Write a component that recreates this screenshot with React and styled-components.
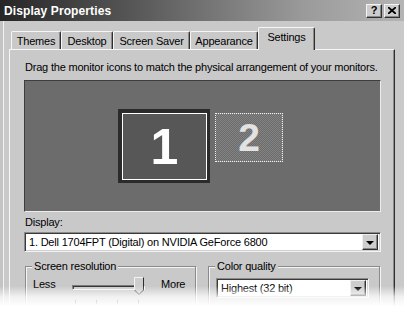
import styled, { createGlobalStyle } from "styled-components";

const Global = createGlobalStyle`
  html, body {
    margin: 0;
    padding: 0;
    background: #ffffff;
  }
  body {
    font-family: "Liberation Sans", Arial, sans-serif;
    font-size: 11px;
    color: #000;
  }
`;

const Window = styled.div`
  position: relative;
  width: 404px;
  height: 310px;
  overflow: hidden;
  background: #c9c9c9;
  box-shadow: inset 3px 0 0 #c4c4c4, inset 4px 0 0 #f2f2f2;
`;

const TitleBar = styled.div`
  height: 21px;
  display: flex;
  align-items: center;
  padding: 0 4px 0 4px;
  background: linear-gradient(to right, #262626 0%, #5a5a5a 35%, #9a9a9a 75%, #b4b4b4 100%);
  box-sizing: border-box;
`;

const Title = styled.span`
  flex: 1;
  color: #ffffff;
  font-weight: bold;
  font-size: 12px;
  letter-spacing: 0.1px;
`;

const CaptionButton = styled.div`
  width: 16px;
  height: 14px;
  box-sizing: border-box;
  margin-left: ${(p) => (p.$gap ? "2px" : "0")};
  background: #cdcdcd;
  border-top: 1px solid #f4f4f4;
  border-left: 1px solid #f4f4f4;
  border-right: 1px solid #303030;
  border-bottom: 1px solid #303030;
  box-shadow: inset -1px -1px 0 #888;
  display: flex;
  align-items: center;
  justify-content: center;
  font-weight: bold;
  font-size: 11px;
  line-height: 1;
  color: #000;
`;

const Body = styled.div`
  padding: 6px 9px 0 9px;
`;

const TabRow = styled.div`
  display: flex;
  align-items: flex-end;
  height: 22px;
  padding-left: 2px;
  position: relative;
  z-index: 1;
`;

const Tab = styled.div`
  box-sizing: border-box;
  width: ${(p) => p.$w}px;
  height: ${(p) => (p.$active ? 23 : 18)}px;
  margin-bottom: ${(p) => (p.$active ? -1 : 0)}px;
  padding-top: 3px;
  text-align: center;
  background: #c9c9c9;
  border-top: 1px solid #f6f6f6;
  border-left: 1px solid #f6f6f6;
  border-right: 1px solid #2e2e2e;
  border-top-left-radius: 2px;
  border-top-right-radius: 2px;
  box-shadow: inset -1px 0 0 #8a8a8a;
  letter-spacing: -0.2px;
  font-size: 11px;
`;

const Panel = styled.div`
  box-sizing: border-box;
  width: 386px;
  height: 280px;
  border-top: 1px solid #f6f6f6;
  border-left: 1px solid #f6f6f6;
  border-right: 1px solid #2e2e2e;
  box-shadow: inset -1px 0 0 #8a8a8a;
  padding: 11px 14px 0 14px;
`;

const Hint = styled.div`
  line-height: 13px;
  letter-spacing: -0.2px;
  padding-left: 1px;
`;

const MonitorArea = styled.div`
  box-sizing: border-box;
  margin-top: 6px;
  width: 357px;
  height: 132px;
  background: #6c6c6c;
  border-top: 1px solid #3e3e3e;
  border-left: 1px solid #3e3e3e;
  border-right: 1px solid #ececec;
  border-bottom: 1px solid #ececec;
  display: flex;
  align-items: flex-start;
  padding: 28px 0 0 93px;
  gap: 5px;
`;

const PrimaryMonitor = styled.div`
  box-sizing: border-box;
  width: 92px;
  height: 74px;
  background: #2b2b2b;
  padding: 4px 3px 3px 4px;
`;

const MonitorFace = styled.div`
  box-sizing: border-box;
  height: 100%;
  border: 1px solid #ffffff;
  background: #575757;
  display: flex;
  align-items: center;
  justify-content: center;
  color: #ffffff;
  font-weight: bold;
  font-size: ${(p) => p.$size}px;
  line-height: 1;
`;

const SecondaryMonitor = styled.div`
  box-sizing: border-box;
  margin-top: 4px;
  width: 68px;
  height: 49px;
  border: 1px dotted #f0f0f0;
  background-color: #767676;
  background-image: repeating-conic-gradient(#6a6a6a 0 25%, #858585 0 50%);
  background-size: 2px 2px;
  display: flex;
  align-items: center;
  justify-content: center;
  color: #e2e2e2;
  font-weight: bold;
  font-size: 39px;
  line-height: 1;
`;

const FieldLabel = styled.div`
  margin-top: 4px;
  line-height: 13px;
  padding-left: 1px;
  letter-spacing: -0.2px;
`;

const Select = styled.div`
  box-sizing: border-box;
  margin-top: ${(p) => p.$mt || 0}px;
  width: ${(p) => p.$w}px;
  height: 20px;
  background: #ffffff;
  border-top: 1px solid #8a8a8a;
  border-left: 1px solid #8a8a8a;
  border-right: 1px solid #f4f4f4;
  border-bottom: 1px solid #f4f4f4;
  box-shadow: inset 1px 1px 0 #3a3a3a, inset -1px -1px 0 #cfcfcf;
  display: flex;
  align-items: center;
  padding: 0 2px 0 4px;
`;

const SelectText = styled.span`
  flex: 1;
  letter-spacing: -0.2px;
  white-space: nowrap;
`;

const DropButton = styled.div`
  box-sizing: border-box;
  width: 16px;
  height: 16px;
  background: #cdcdcd;
  border-top: 1px solid #efefef;
  border-left: 1px solid #efefef;
  border-right: 1px solid #303030;
  border-bottom: 1px solid #303030;
  box-shadow: inset -1px -1px 0 #888;
  display: flex;
  align-items: center;
  justify-content: center;

  &::after {
    content: "";
    border-left: 4px solid transparent;
    border-right: 4px solid transparent;
    border-top: 4px solid #000;
    margin-top: 1px;
  }
`;

const GroupRow = styled.div`
  display: flex;
  gap: 12px;
  margin-top: 14px;
  padding-left: 1px;
`;

const Group = styled.div`
  position: relative;
  box-sizing: border-box;
  width: ${(p) => p.$w}px;
  height: 60px;
  border: 1px solid #8a8a8a;
  box-shadow: inset 1px 1px 0 #f4f4f4, 1px 1px 0 #f4f4f4;
  padding: 11px 7px 0 7px;
`;

const GroupCaption = styled.span`
  position: absolute;
  top: -7px;
  left: 6px;
  padding: 0 2px;
  background: #c9c9c9;
  line-height: 13px;
  letter-spacing: -0.2px;
`;

const SliderRow = styled.div`
  display: flex;
  align-items: flex-start;
  height: 22px;
`;

const SliderLabel = styled.span`
  line-height: 13px;
  letter-spacing: -0.2px;
  width: ${(p) => p.$w}px;
`;

const Track = styled.div`
  position: relative;
  width: 71px;
  height: 3px;
  margin-top: 7px;
  border-top: 1px solid #7a7a7a;
  border-left: 1px solid #7a7a7a;
  border-bottom: 1px solid #f4f4f4;
  border-right: 1px solid #f4f4f4;
  box-shadow: inset 1px 1px 0 #2e2e2e;
  background: #c9c9c9;
  margin-right: 16px;
`;

const Thumb = styled.svg`
  position: absolute;
  left: 61px;
  top: -9px;
`;

const Ticks = styled.div`
  display: flex;
  gap: 20px;
  padding-left: 42px;
`;

const Tick = styled.span`
  width: 1px;
  height: 4px;
  background: #000;
`;

const Fade = styled.div`
  position: absolute;
  left: 0;
  right: 0;
  bottom: 0;
  height: 24px;
  background: linear-gradient(to bottom, rgba(255, 255, 255, 0) 0%, rgba(255, 255, 255, 0.75) 45%, #ffffff 85%);
  pointer-events: none;
`;

const tabs = [
  { label: "Themes", w: 50 },
  { label: "Desktop", w: 52 },
  { label: "Screen Saver", w: 77 },
  { label: "Appearance", w: 68 },
  { label: "Settings", w: 57, active: true },
];

export default function App() {
  return (
    <Window>
      <Global />
      <TitleBar>
        <Title>Display Properties</Title>
        <CaptionButton>?</CaptionButton>
        <CaptionButton $gap>
          <svg width="8" height="7" viewBox="0 0 8 7">
            <path d="M0 0 L8 7 M8 0 L0 7" stroke="#000" strokeWidth="1.8" />
          </svg>
        </CaptionButton>
      </TitleBar>
      <Body>
        <TabRow>
          {tabs.map((t) => (
            <Tab key={t.label} $w={t.w} $active={t.active}>
              {t.label}
            </Tab>
          ))}
        </TabRow>
        <Panel>
          <Hint>Drag the monitor icons to match the physical arrangement of your monitors.</Hint>
          <MonitorArea>
            <PrimaryMonitor>
              <MonitorFace $size={50}>1</MonitorFace>
            </PrimaryMonitor>
            <SecondaryMonitor>2</SecondaryMonitor>
          </MonitorArea>
          <FieldLabel>Display:</FieldLabel>
          <Select $mt={3} $w={357}>
            <SelectText>1. Dell 1704FPT (Digital) on NVIDIA GeForce 6800</SelectText>
            <DropButton />
          </Select>
          <GroupRow>
            <Group $w={171}>
              <GroupCaption>Screen resolution</GroupCaption>
              <SliderRow>
                <SliderLabel $w={39}>Less</SliderLabel>
                <Track>
                  <Thumb width="10" height="18" viewBox="0 0 10 18">
                    <path d="M0.5 0.5 H9.5 V13 L5 17.5 L0.5 13 Z" fill="#cdcdcd" />
                    <path d="M0.5 13 V0.5 H9" fill="none" stroke="#f4f4f4" />
                    <path d="M9.5 0.5 V13 L5 17.5 L0.5 13" fill="none" stroke="#2e2e2e" />
                  </Thumb>
                </Track>
                <SliderLabel>More</SliderLabel>
              </SliderRow>
              <Ticks>
                <Tick />
                <Tick />
                <Tick />
                <Tick />
              </Ticks>
            </Group>
            <Group $w={172}>
              <GroupCaption>Color quality</GroupCaption>
              <Select $w={153}>
                <SelectText>Highest (32 bit)</SelectText>
                <DropButton />
              </Select>
            </Group>
          </GroupRow>
        </Panel>
      </Body>
      <Fade />
    </Window>
  );
}
